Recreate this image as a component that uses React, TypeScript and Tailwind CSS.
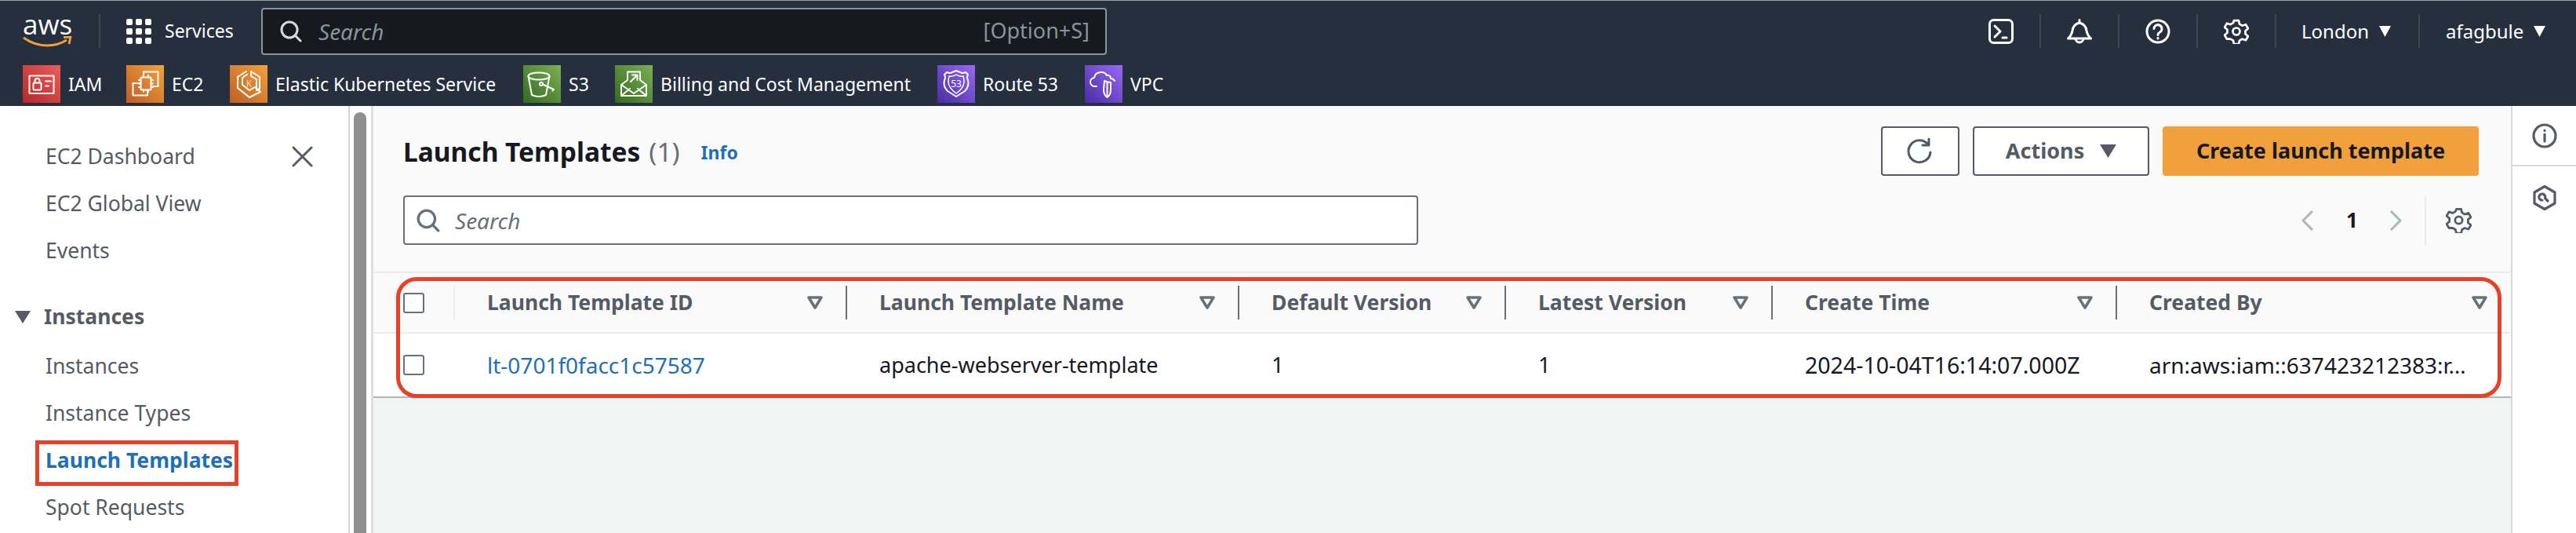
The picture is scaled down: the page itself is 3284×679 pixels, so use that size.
import React from "react";

const Wh = (p: { children: React.ReactNode; size?: number; sw?: number }) => (
  <svg width={p.size ?? 48} height={p.size ?? 48} viewBox={`0 0 ${p.size ?? 48} ${p.size ?? 48}`} fill="none" stroke="#fff" strokeWidth={p.sw ?? 2} strokeLinejoin="round" strokeLinecap="round">
    {p.children}
  </svg>
);

const IamIcon = () => (
  <Wh>
    <rect x="8.5" y="13.5" width="31" height="22.5" />
    <rect x="13.5" y="22.5" width="10" height="9" rx="1" />
    <path d="M15.5 22.5v-2.5a3 3 0 0 1 6 0v2.5M29 20.5h7M29 26.5h4" />
  </Wh>
);
const Ec2Icon = () => (
  <Wh>
    <path d="M22 14V8.5h18.5V27H34M8.5 28v-5h9M8.5 28v10.5H27V33" />
    <rect x="18.5" y="15.5" width="13" height="16" rx="1" />
    <path d="M16 19h2.5M16 23.5h2.5M16 28h2.5M31.500 19H34M31.500 23.500H34M31.500 28H34M22 13v2.500M28 13v2.500M22 31.500V34M28 31.500V34" />
  </Wh>
);
const EksIcon = () => (
  <Wh>
    <path d="M21 8l-11 7v14l15 12 14-7-7-6-7 4-9-7v-9l6-4" />
    <path d="M27 8l11 7v15l-4 2v-14l-7-4z" />
    <text x="24.500" y="28" fontSize="12" fill="#f6d9b8" stroke="none" textAnchor="middle" fontFamily="'Noto Sans', sans-serif">K</text>
  </Wh>
);
const S3Icon = () => (
  <Wh>
    <ellipse cx="20" cy="14" rx="13.500" ry="4.500" />
    <path d="M6.500 14l4.500 24q9 4 18 0l4.500-24" />
    <circle cx="23" cy="24" r="2" />
    <path d="M25 24.500l14 6.500-1.500 1.500" />
  </Wh>
);
const BillingIcon = () => (
  <Wh>
    <path d="M16 19V8.500h16V19M8 25v14h32V25L32 19M16 19L8 25l16 11 16-11M8 39l11-9M40 39l-11-9" />
    <path d="M20 21l8-8M22 12.500h6.500V19" />
  </Wh>
);
const R53Icon = () => (
  <Wh>
    <path d="M12 9q4 2 7 0 3-1 5-2 2 1 5 2 3 2 7 0l3 3q-2 4 0 7 2 8-4 14l-11 7-11-7q-6-6-4-14 2-3 0-7z" />
    <path d="M15 14q5 1 9-2 4 3 9 2 1 4 1 7 0 8-10 15-10-7-10-15 0-3 1-7z" strokeWidth="1.500" />
    <text x="24" y="28" fontSize="12" fill="#fff" stroke="none" textAnchor="middle" fontFamily="'Noto Sans', sans-serif">53</text>
  </Wh>
);
const VpcIcon = () => (
  <Wh>
    <path d="M15 27h-2a5.500 5.500 0 0 1-1-11q1-7 9-7 5 0 7 4 2-1 4 1 1 1 1 3 3 0 5 3" />
    <path d="M29 20q4 2 8 2v9q0 7-4.500 10-4.500-3-4.500-10z" transform="translate(-4 0)" />
    <path d="M28.500 22v18" />
  </Wh>
);

const bookmarks = [
  { label: "IAM", w: "w-[132px]", bg: "from-[#b62525] to-[#ea5d5d]", icon: <IamIcon /> },
  { label: "EC2", w: "w-[132px]", bg: "from-[#bf5e24] to-[#f4a13c]", icon: <Ec2Icon /> },
  { label: "Elastic Kubernetes Service", w: "w-[374px]", bg: "from-[#bf5e24] to-[#f4a13c]", icon: <EksIcon /> },
  { label: "S3", w: "w-[117px]", bg: "from-[#336b1e] to-[#7cb054]", icon: <S3Icon /> },
  { label: "Billing and Cost Management", w: "w-[411px]", bg: "from-[#336b1e] to-[#7cb054]", icon: <BillingIcon /> },
  { label: "Route 53", w: "w-[188px]", bg: "from-[#4a2ba6] to-[#9a69f5]", icon: <R53Icon /> },
  { label: "VPC", w: "w-[102px]", bg: "from-[#4a2ba6] to-[#9a69f5]", icon: <VpcIcon /> },
];

const Tri = () => (
  <svg viewBox="0 0 17 16" className="w-[17px] h-[16px] shrink-0">
    <path d="M1 1h15L8.500 15z" fill="currentColor" />
  </svg>
);

const SearchIcon = ({ color, size = 28 }: { color: string; size?: number }) => (
  <svg width={size} height={size} viewBox="0 0 28 28" fill="none" stroke={color} strokeWidth="3" strokeLinecap="round">
    <circle cx="12" cy="12" r="10" />
    <path d="M19 19l7 7" />
  </svg>
);

const GearIcon = ({ color, size = 32 }: { color: string; size?: number }) => (
  <svg width={size} height={size} viewBox="0 0 32 32" fill="none" stroke={color} strokeWidth="2.700" strokeLinejoin="round">
    <path d="M13 2h6l1 4.500 3.500 2 4.500-1.500 3 5-3.500 3v4l3.500 3-3 5-4.500-1.500-3.500 2-1 4.500h-6l-1-4.500-3.500-2L4 25.500l-3-5 3.500-3v-4L1 10.500l3-5L8.500 7 12 5z" transform="translate(0 0.200)" />
    <circle cx="16" cy="16" r="4.500" />
  </svg>
);

const SortIcon = () => (
  <svg width="20" height="17" viewBox="0 0 20 17" fill="none" stroke="#687078" strokeWidth="3.500" strokeLinejoin="round" className="shrink-0">
    <path d="M2 2h16L10 15z" />
  </svg>
);

const Divider = ({ h = "h-[43px]", c = "bg-[#414750]" }: { h?: string; c?: string }) => (
  <div className={`w-[2px] ${h} ${c} shrink-0`} />
);

const columns = [
  { title: "Launch Template ID", cell: "lt-0701f0facc1c57587", w: "w-[500px]", size: "text-[28px]", link: true },
  { title: "Launch Template Name", cell: "apache-webserver-template", w: "w-[500px]", size: "text-[27px]" },
  { title: "Default Version", cell: "1", w: "w-[340px]", size: "text-[27.5px]" },
  { title: "Latest Version", cell: "1", w: "w-[340px]", size: "text-[27.5px]" },
  { title: "Create Time", cell: "2024-10-04T16:14:07.000Z", w: "w-[439px]", size: "text-[28.500px]" },
  { title: "Created By", cell: "arn:aws:iam::637423212383:r…", w: "w-[472px]", size: "text-[28px]", last: true },
];

const Checkbox = () => <div className="w-[27px] h-[26px] rounded-[3px] border-2 border-[#687078] bg-white shrink-0" />;

const nav1 = ["EC2 Dashboard", "EC2 Global View", "Events"];
const nav2 = ["Instances", "Instance Types", "Launch Templates", "Spot Requests"];

export default function App() {
  return (
    <div className="relative w-[3284px] h-[679px] overflow-hidden bg-white font-['Noto_Sans',sans-serif]">
      <header className="h-[135px] bg-[#252f3e] border-t-[1px] border-[#9aa0a6] text-white flex flex-col">
        <div className="h-[77px] pl-[29px] flex items-center">
          <div className="w-[64px] h-[40px] relative shrink-0">
            <span className="absolute left-0 top-[-14px] text-[35px] leading-[50px] font-['Open_Sans',sans-serif]">aws</span>
            <svg className="absolute left-0 top-[26px]" width="64" height="14" viewBox="0 0 64 14" fill="none">
              <path d="M1 2q14 10 30 10 14 0 25-7" stroke="#f2a03b" strokeWidth="2.800" />
              <path d="M52 1.500l9-.5-2 9" stroke="#f2a03b" strokeWidth="2.800" />
            </svg>
          </div>
          <div className="w-[2px] h-[43px] bg-[#414750] ml-[33px]" />
          <div className="ml-[33px] grid grid-cols-3 gap-x-[4px] gap-y-[4px] w-[32px] shrink-0">
            {Array.from({ length: 9 }).map((_, i) => (
              <div key={i} className="w-[8px] h-[8px] rounded-[2px] bg-white" />
            ))}
          </div>
          <span className="ml-[17px] w-[123px] text-[23px]">Services</span>
          <div className="w-[1078px] h-[60px] rounded-[4px] border-2 border-[#879596] bg-[#16191f] flex items-center pl-[22px] pr-[20px] shrink-0">
            <SearchIcon color="#d5dbdb" />
            <span className="ml-[21px] italic text-[28px] text-[#879596]">Search</span>
            <span className="ml-auto text-[27px] text-[#879596]">[Option+S]</span>
          </div>
          <div className="ml-auto flex items-center h-[43px]">
            <div className="pr-[33px]">
              <svg width="32" height="32" viewBox="0 0 32 32" fill="none" stroke="#fff" strokeWidth="3" strokeLinejoin="round" strokeLinecap="round">
                <rect x="1.500" y="1.500" width="29" height="29" rx="5" />
                <path d="M8 9l7 7-7 7M18 24h5" />
              </svg>
            </div>
            <Divider />
            <div className="px-[33px]">
              <svg width="32" height="32" viewBox="0 0 32 32" fill="none" stroke="#fff" strokeWidth="3" strokeLinejoin="round" strokeLinecap="round">
                <path d="M1.500 25q4.500-4 5.500-10 1-8 9-10 8 2 9 10 1 6 5.500 10zM16 1.500V5M11 25a5 5 0 0 0 10 0" />
              </svg>
            </div>
            <Divider />
            <div className="px-[33px]">
              <svg width="32" height="32" viewBox="0 0 32 32" fill="none" stroke="#fff" strokeWidth="3" strokeLinecap="round">
                <circle cx="16" cy="16" r="14" />
                <path d="M11 12.500a5 5 0 1 1 7.500 4.500q-2.500 1.500-2.500 3.500M16 24.500v.5" />
              </svg>
            </div>
            <Divider />
            <div className="px-[33px]">
              <GearIcon color="#fff" />
            </div>
            <Divider />
            <div className="w-[181px] pl-[32px] flex items-center gap-[12px] text-[24px]">
              <span>London</span>
              <Tri />
            </div>
            <Divider />
            <div className="w-[199px] pl-[33px] flex items-center gap-[12px] text-[24px]">
              <span>afagbule</span>
              <Tri />
            </div>
          </div>
        </div>
        <div className="pl-[29px] pt-[5px] flex items-start">
          {bookmarks.map((b) => (
            <div key={b.label} className={`${b.w} flex items-center shrink-0`}>
              <div className={`w-[48px] h-[48px] bg-linear-to-tr ${b.bg} shrink-0`}>{b.icon}</div>
              <span className="ml-[10px] text-[23px] whitespace-nowrap">{b.label}</span>
            </div>
          ))}
        </div>
      </header>

      <div className="flex h-[544px]">
        <aside className="w-[444px] shrink-0 pt-[35px] text-[26.5px] text-[#545b64] relative">
          {nav1.map((t) => (
            <div key={t} className="h-[60px] pl-[58px] flex items-center">{t}</div>
          ))}
          <svg className="absolute left-[372px] top-[51px]" width="27" height="27" viewBox="0 0 27 27" stroke="#545b64" strokeWidth="3" strokeLinecap="round">
            <path d="M2 2l23 23M25 2L2 25" />
          </svg>
          <div className="h-[60px] mt-[24px] pl-[19px] flex items-center font-bold">
            <svg width="20" height="16" viewBox="0 0 20 16" fill="#545b64" className="shrink-0"><path d="M0 0h20L10 16z" /></svg>
            <span className="ml-[17px]">Instances</span>
          </div>
          <div className="mt-[3px]">
            {nav2.map((t) => (
              <div key={t} className={`h-[60px] pl-[58px] flex items-center ${t === "Launch Templates" ? "font-bold text-[#1f6fb8]" : ""}`}>{t}</div>
            ))}
          </div>
        </aside>

        <div className="w-[29px] shrink-0 border-l-2 border-[#d5d5d5] pl-[5px] pt-[8px] bg-white">
          <div className="w-[16px] h-[600px] rounded-full bg-[#8f8f8f]" />
        </div>

        <main className="flex-1 border-l-[3px] border-[#dcdfe0] bg-[#f2f3f3] flex flex-col">
          <section className="h-[185px] bg-[#fafafa] border-b-2 border-[#eaeded] pl-[38px] pr-[41px] pt-[26px] shrink-0 box-content">
            <div className="h-[63px] flex items-center">
              <h1 className="text-[33.5px] font-bold text-[#16191f] pt-[2px]">Launch Templates</h1>
              <span className="ml-[11px] pt-[2px] text-[33.5px] text-[#687078]">(1)</span>
              <span className="ml-[27px] pt-[4px] text-[23px] font-bold text-[#1f6fb8]">Info</span>
              <button className="ml-auto w-[100px] h-[63px] rounded-[4px] border-2 border-[#545b64] bg-white flex items-center justify-center">
                <svg width="36" height="36" viewBox="0 0 36 36" fill="none" stroke="#545b64" strokeWidth="3" strokeLinecap="round" strokeLinejoin="round">
                  <path d="M28 9a14 14 0 1 0 3 10M29 2v8h-8" />
                </svg>
              </button>
              <button className="ml-[17px] w-[225px] h-[63px] rounded-[4px] border-2 border-[#545b64] bg-white text-[#545b64] text-[27px] font-bold flex items-center justify-center gap-[20px]">
                Actions
                <svg width="21" height="17" viewBox="0 0 21 17" fill="#545b64"><path d="M0 0h21L10.500 17z" /></svg>
              </button>
              <button className="ml-[17px] w-[403px] h-[63px] rounded-[4px] bg-[#f2a03b] text-[#16191f] text-[27px] font-bold flex items-center justify-center">
                Create launch template
              </button>
            </div>
            <div className="h-[63px] mt-[25px] flex items-center">
              <div className="w-[1294px] h-[63px] rounded-[4px] border-2 border-[#687078] bg-white flex items-center pl-[15px]">
                <SearchIcon color="#687078" size={30} />
                <span className="ml-[19px] italic text-[28px] text-[#687078]">Search</span>
              </div>
              <div className="ml-auto flex items-center">
                <svg width="16" height="28" viewBox="0 0 16 28" fill="none" stroke="#aab7b8" strokeWidth="3"><path d="M14 2L2 14l12 12" /></svg>
                <span className="ml-[41px] w-[12px] text-[26px] font-bold text-[#16191f]">1</span>
                <svg className="ml-[43px]" width="16" height="28" viewBox="0 0 16 28" fill="none" stroke="#aab7b8" strokeWidth="3"><path d="M2 2l12 12L2 26" /></svg>
                <div className="ml-[29px] w-[2px] h-[63px] bg-[#eaeded]" />
                <div className="ml-[25px]"><GearIcon color="#545b64" size={33} /></div>
                <div className="w-[9px]" />
              </div>
            </div>
          </section>

          <div className="h-[75px] bg-[#fafafa] border-b-2 border-[#eaeded] flex items-center shrink-0 box-content">
            <div className="w-[104px] pl-[38px] flex items-center justify-between shrink-0">
              <Checkbox />
              <Divider c="bg-[#eaeded]" />
            </div>
            {columns.map((c) => (
              <div key={c.title} className={`${c.w} shrink-0 flex items-center pl-[41px]`}>
                <span className="text-[26.5px] font-bold text-[#545b64] whitespace-nowrap">{c.title}</span>
                <span className={`ml-auto ${c.last ? "" : "mr-[29px]"}`}><SortIcon /></span>
                {!c.last && <Divider c="bg-[#687078]" />}
              </div>
            ))}
          </div>

          <div className="h-[80px] bg-white border-b-2 border-[#aab7b8] flex items-center shrink-0 box-content">
            <div className="w-[104px] pl-[38px] shrink-0"><Checkbox /></div>
            {columns.map((c) => (
              <div key={c.title} className={`${c.w} shrink-0 pl-[41px] ${c.size} whitespace-nowrap ${c.link ? "text-[#1f6fb8]" : "text-[#16191f]"}`}>
                {c.cell}
              </div>
            ))}
          </div>
        </main>

        <aside className="w-[83px] shrink-0 border-l-2 border-[#d5dbdb] bg-white flex flex-col">
          <div className="h-[75px] border-b-2 border-[#d5dbdb] flex items-center justify-center box-content">
            <svg width="32" height="32" viewBox="0 0 32 32" fill="none" stroke="#545b64" strokeWidth="3.200" strokeLinecap="round">
              <circle cx="16" cy="16" r="14" />
              <path d="M16 14v9M16 9v.5" />
            </svg>
          </div>
          <div className="flex justify-center pt-[24px]">
            <svg width="32" height="32" viewBox="0 0 32 32" fill="none" stroke="#545b64" strokeWidth="3.200" strokeLinejoin="round" strokeLinecap="round">
              <path d="M16 1.500L29 9v14l-13 7.500L3 23V9z" />
              <path d="M20 20l-3.500-3.500A4 4 0 1 0 13 19" />
            </svg>
          </div>
        </aside>
      </div>

      <div className="absolute left-[505px] top-[353px] w-[2684px] h-[154px] rounded-[26px] border-[5px] border-[#e8412a]" />
      <div className="absolute left-[45px] top-[561px] w-[259px] h-[58px] border-[5px] border-[#e8412a]" />
    </div>
  );
}
